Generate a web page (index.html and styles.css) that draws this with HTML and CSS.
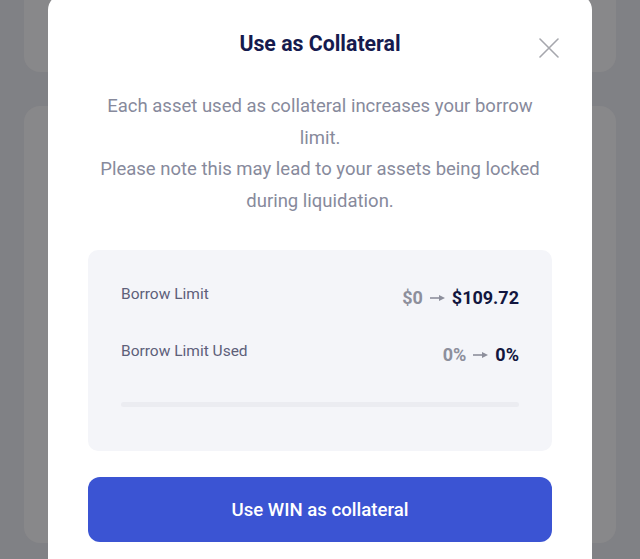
FILE: index.html
```html
<!DOCTYPE html>
<html lang="en">
<head>
<meta charset="utf-8">
<title>Use as Collateral</title>
<link rel="stylesheet" href="styles.css">
</head>
<body>
  <div class="page">
    <div class="bg-card bg-card-top"></div>
    <div class="bg-card bg-card-main"></div>
  </div>
  <div class="overlay">
    <div class="modal">
      <div class="modal-header">
        <h2 class="modal-title">Use as Collateral</h2>
        <button class="close-btn" aria-label="Close">
          <svg width="20" height="20" viewBox="0 0 20 20"><path d="M1 1 L19 19 M19 1 L1 19" stroke="#a6a7ad" stroke-width="1.6" fill="none" stroke-linecap="round"/></svg>
        </button>
      </div>
      <p class="modal-desc">Each asset used as collateral increases your borrow limit.<br>Please note this may lead to your assets being locked during liquidation.</p>
      <div class="info-box">
        <div class="info-row">
          <span class="info-label">Borrow Limit</span>
          <span class="info-value">
            <span class="old">$0</span>
            <svg class="arrow" width="15" height="8" viewBox="0 0 15 8"><path d="M0 4 H10" stroke="#8d8f9c" stroke-width="1.6"/><path d="M9 1 L15 4 L9 7 Z" fill="#8d8f9c"/></svg>
            <span class="new">$109.72</span>
          </span>
        </div>
        <div class="info-row">
          <span class="info-label">Borrow Limit Used</span>
          <span class="info-value">
            <span class="old">0%</span>
            <svg class="arrow" width="15" height="8" viewBox="0 0 15 8"><path d="M0 4 H10" stroke="#8d8f9c" stroke-width="1.6"/><path d="M9 1 L15 4 L9 7 Z" fill="#8d8f9c"/></svg>
            <span class="new">0%</span>
          </span>
        </div>
        <div class="progress"><div class="progress-fill" style="width:0%"></div></div>
      </div>
      <button class="primary-btn">Use WIN as collateral</button>
    </div>
  </div>
</body>
</html>
```
FILE: styles.css
```css
* { box-sizing: border-box; }
html, body { margin: 0; padding: 0; }
body {
  background: #808185;
  font-family: Roboto, "Liberation Sans", sans-serif;
  overflow: hidden;
  height: 559px;
}
.page {
  padding: 0 24px;
  display: flex;
  flex-direction: column;
  gap: 34px;
}
.bg-card {
  background: #88888a;
  border-radius: 16px;
}
.bg-card-top { height: 100px; margin-top: -28px; }
.bg-card-main { height: 437px; }

.overlay {
  position: fixed;
  inset: 0;
}
.modal {
  position: absolute;
  left: 48px;
  right: 48px;
  top: -6px;
  bottom: -40px;
  background: #ffffff;
  border-radius: 16px;
  padding: 36px 40px 0;
}
.modal-header {
  position: relative;
  display: flex;
  justify-content: center;
}
.modal-title {
  margin: 0;
  font-size: 21.3px;
  line-height: 28px;
  font-weight: 700;
  color: #151a4e;
}
.close-btn {
  position: absolute;
  right: -7px;
  top: 8px;
  width: 20px;
  height: 20px;
  padding: 0;
  border: 0;
  background: none;
  display: flex;
}
.modal-desc {
  margin: 33px 0 0;
  text-align: center;
  font-size: 18.5px;
  line-height: 31.5px;
  color: #878a9c;
}
.info-box {
  margin-top: 33px;
  background: #f4f5f9;
  border-radius: 10px;
  padding: 32px 33px 44px;
  display: flex;
  flex-direction: column;
}
.info-row {
  display: flex;
  justify-content: space-between;
  align-items: flex-start;
}
.info-row + .info-row { margin-top: 29px; }
.info-label {
  font-size: 15.5px;
  line-height: 24px;
  color: #5d6079;
}
.info-value {
  padding-top: 4px;
  display: flex;
  align-items: center;
  gap: 7px;
  font-size: 18px;
  line-height: 24px;
  font-weight: 700;
}
.info-value .old { color: #8d8f9c; }
.info-value .new { color: #12163f; }
.progress {
  margin-top: 35px;
  height: 5px;
  border-radius: 3px;
  background: #ebecf1;
}
.progress-fill { height: 100%; background: #3b54d3; border-radius: 3px; }
.primary-btn {
  margin-top: 26px;
  width: 100%;
  height: 65px;
  border: 0;
  border-radius: 12px;
  background: #3b54d3;
  color: #ffffff;
  font-family: Roboto, "Liberation Sans", sans-serif;
  font-size: 18.6px;
  font-weight: 500;
}
```
